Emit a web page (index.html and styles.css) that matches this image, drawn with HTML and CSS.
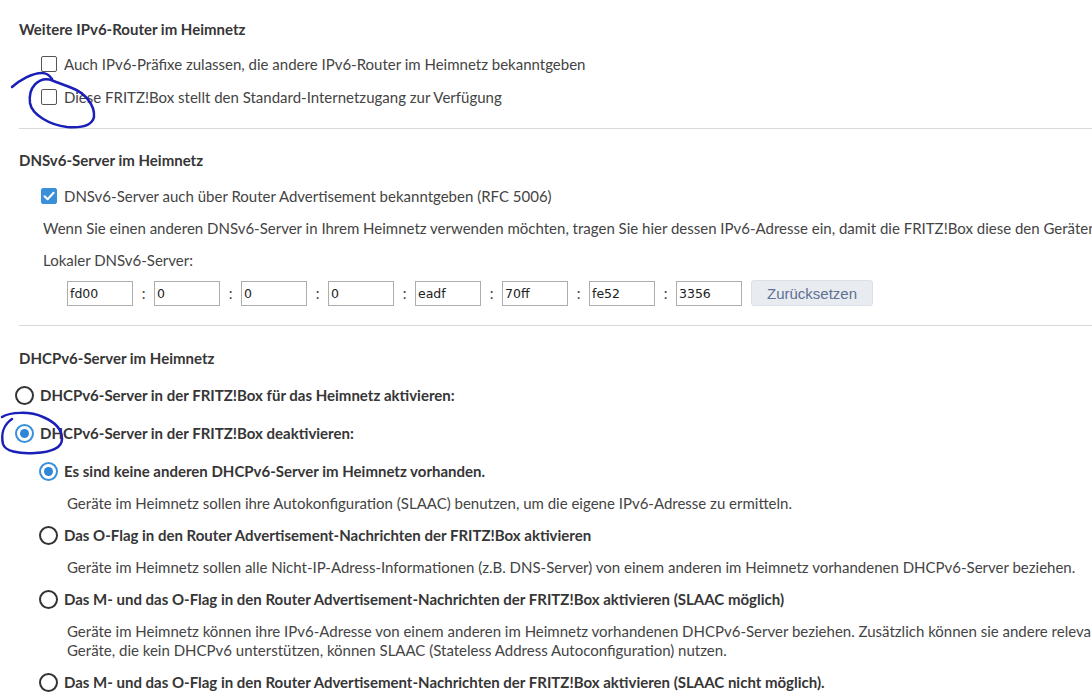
FILE: index.html
```html
<!DOCTYPE html>
<html lang="de">
<head>
    <meta charset="UTF-8">
    <title>Heimnetz IPv6</title>
    <link rel="stylesheet" href="styles.css">
</head>
<body>
    <div class="page">
        <div class="section first">
            <h2>Weitere IPv6-Router im Heimnetz</h2>
            <div class="check-row">
                <span class="box"></span>
                <span>Auch IPv6-Präfixe zulassen, die andere IPv6-Router im Heimnetz bekanntgeben</span>
            </div>
            <div class="check-row">
                <span class="box"></span>
                <span>Diese FRITZ!Box stellt den Standard-Internetzugang zur Verfügung</span>
            </div>
        </div>

        <div class="section dns">
            <h2>DNSv6-Server im Heimnetz</h2>
            <div class="check-row">
                <span class="box checked">
                    <svg width="16" height="16" viewBox="0 0 16 16"><path d="M3.5 8.2 L6.6 11.2 L12.6 4.8" fill="none" stroke="#fff" stroke-width="2" stroke-linecap="round" stroke-linejoin="round"/></svg>
                </span>
                <span>DNSv6-Server auch über Router Advertisement bekanntgeben (RFC 5006)</span>
            </div>
            <p class="text-row">Wenn Sie einen anderen DNSv6-Server in Ihrem Heimnetz verwenden möchten, tragen Sie hier dessen IPv6-Adresse ein, damit die FRITZ!Box diese den Geräten</p>
            <p class="text-row">Lokaler DNSv6-Server:</p>
            <div class="addr-row">
                <input type="text" value="fd00"><span class="sep">:</span>
                <input type="text" value="0"><span class="sep">:</span>
                <input type="text" value="0"><span class="sep">:</span>
                <input type="text" value="0"><span class="sep">:</span>
                <input type="text" value="eadf"><span class="sep">:</span>
                <input type="text" value="70ff"><span class="sep">:</span>
                <input type="text" value="fe52"><span class="sep">:</span>
                <input type="text" value="3356">
                <button class="btn-reset">Zurücksetzen</button>
            </div>
        </div>

        <div class="section dhcp">
            <h2>DHCPv6-Server im Heimnetz</h2>
            <div class="radio-row top">
                <span class="radio"></span>
                <span>DHCPv6-Server in der FRITZ!Box für das Heimnetz aktivieren:</span>
            </div>
            <div class="radio-row top">
                <span class="radio on"></span>
                <span>DHCPv6-Server in der FRITZ!Box deaktivieren:</span>
            </div>
            <div class="sub">
                <div class="radio-row">
                    <span class="radio on"></span>
                    <span>Es sind keine anderen DHCPv6-Server im Heimnetz vorhanden.</span>
                </div>
                <p class="desc">Geräte im Heimnetz sollen ihre Autokonfiguration (SLAAC) benutzen, um die eigene IPv6-Adresse zu ermitteln.</p>
                <div class="radio-row">
                    <span class="radio"></span>
                    <span>Das O-Flag in den Router Advertisement-Nachrichten der FRITZ!Box aktivieren</span>
                </div>
                <p class="desc">Geräte im Heimnetz sollen alle Nicht-IP-Adress-Informationen (z.B. DNS-Server) von einem anderen im Heimnetz vorhandenen DHCPv6-Server beziehen.</p>
                <div class="radio-row">
                    <span class="radio"></span>
                    <span>Das M- und das O-Flag in den Router Advertisement-Nachrichten der FRITZ!Box aktivieren (SLAAC möglich)</span>
                </div>
                <p class="desc two">Geräte im Heimnetz können ihre IPv6-Adresse von einem anderen im Heimnetz vorhandenen DHCPv6-Server beziehen. Zusätzlich können sie andere releva<br>Geräte, die kein DHCPv6 unterstützen, können SLAAC (Stateless Address Autoconfiguration) nutzen.</p>
                <div class="radio-row">
                    <span class="radio"></span>
                    <span>Das M- und das O-Flag in den Router Advertisement-Nachrichten der FRITZ!Box aktivieren (SLAAC nicht möglich).</span>
                </div>
            </div>
        </div>
    </div>

    <!-- pen marks on the screenshot -->
    <svg class="marks" width="1092" height="694" viewBox="0 0 1092 694">
        <path d="M12,87 C20,80 32,73 42,73 C47,73 50,76 52,79" />
        <path d="M52,80 C38,76 28,88 30,103 C32,115 50,125 67,127 C80,128 92,126 94,117 C95,105 85,93 72,88 C65,85 58,83 51,80" />
        <path d="M2,417 C10,412 30,411 43,417 C55,422 62,430 62,439 C62,448 52,452 35,453 C18,454 5,451 3,444 C1,435 3,425 12,419" />
    </svg>
</body>
</html>
```
FILE: styles.css
```css
* {
    margin: 0;
    padding: 0;
    box-sizing: border-box;
}

body {
    background: #fff;
    font-family: Lato, "Open Sans", sans-serif;
    font-size: 15px;
    color: #444;
    overflow: hidden;
    width: 1092px;
    height: 694px;
    position: relative;
}

.page {
    padding-left: 19px;
    white-space: nowrap;
}

.section {
    border-top: 1px solid #d9d9d9;
}

.section.first {
    border-top: none;
    padding-top: 13px;
    padding-bottom: 15px;
}

h2 {
    font-size: 15px;
    font-weight: 700;
    color: #363636;
    height: 32px;
    line-height: 32px;
}

.check-row {
    display: flex;
    align-items: center;
    height: 33px;
    padding-left: 22px;
    gap: 7px;
}

.first h2 {
    margin-bottom: 2px;
}

.box {
    width: 16px;
    height: 16px;
    border: 1px solid #555;
    border-radius: 2px;
    background: #fff;
    display: flex;
}

.box.checked {
    background: #3a8fd9;
    border-color: #3a8fd9;
}

.box svg {
    margin: -1px;
}

.dns {
    padding-top: 15px;
    padding-bottom: 19px;
}

.dns h2 {
    margin-bottom: 4px;
}

.dns .check-row {
    height: 32px;
}

.text-row {
    height: 32px;
    line-height: 32px;
    padding-left: 24px;
}

.addr-row {
    display: flex;
    align-items: center;
    margin-top: 4px;
    padding-left: 48px;
    height: 26px;
}

.addr-row input {
    width: 66px;
    height: 25px;
    border: 1px solid #adadad;
    font-family: "DejaVu Sans", sans-serif;
    font-size: 12.5px;
    color: #222;
    padding-left: 2px;
    outline: none;
}

.sep {
    width: 21px;
    text-align: center;
    color: #444;
    font-size: 15px;
}

.btn-reset {
    margin-left: 9px;
    width: 122px;
    height: 26px;
    background: #e8ecf1;
    border: 1px solid #dbe0e7;
    border-radius: 3px;
    color: #5f7091;
    font-family: "Liberation Sans", Arial, sans-serif;
    font-size: 15px;
}

.dhcp {
    padding-top: 16px;
}

.dhcp h2 {
    margin-bottom: 2px;
}

.radio-row {
    display: flex;
    align-items: center;
    height: 32px;
    font-weight: 700;
    color: #363636;
    gap: 6px;
}

.radio-row.top {
    height: 38px;
    margin-left: -4px;
}

.radio {
    width: 19px;
    height: 19px;
    border: 2px solid #333;
    border-radius: 50%;
    display: flex;
    align-items: center;
    justify-content: center;
}

.radio.on {
    border-color: #3a8fd9;
}

.radio.on::after {
    content: "";
    width: 9px;
    height: 9px;
    border-radius: 50%;
    background: #2f86d6;
}

.sub {
    margin-top: 3px;
    padding-left: 20px;
}

.desc {
    height: 32px;
    line-height: 32px;
    padding-left: 28px;
}

.desc.two {
    height: auto;
    line-height: 19px;
    padding-top: 7px;
    padding-bottom: 6px;
}

.marks {
    position: absolute;
    left: 0;
    top: 0;
    pointer-events: none;
}

.marks path {
    fill: none;
    stroke: #1a1fb8;
    stroke-width: 2.5;
    stroke-linecap: round;
}
```
